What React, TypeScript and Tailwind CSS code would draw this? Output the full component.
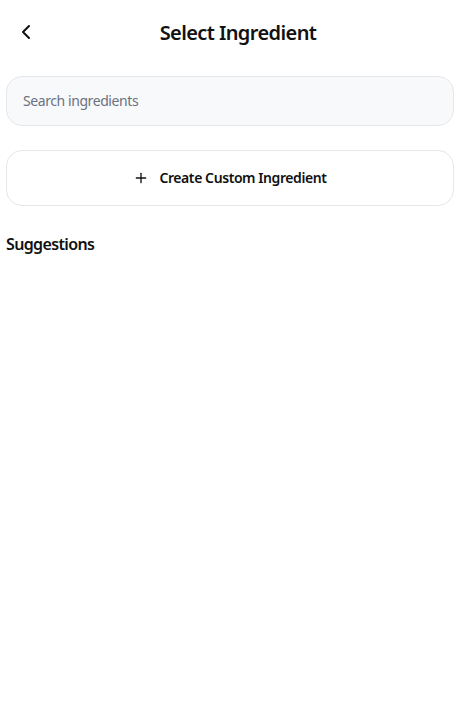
import { ChevronLeft, Plus } from "lucide-react";

export default function App() {
  return (
    <div className="min-h-screen bg-white font-['Noto_Sans',sans-serif] text-[#111111]">
      <header className="relative flex h-[66px] items-center justify-center pl-3">
        <button className="absolute left-[14px] top-[20px] flex h-6 w-6 items-center justify-center text-[#111111]">
          <ChevronLeft className="h-6 w-6" strokeWidth={2} />
        </button>
        <h1 className="text-[20px] font-semibold tracking-[-0.03em]">Select Ingredient</h1>
      </header>

      <div className="pl-[6px] pr-[10px]">
        <div className="mt-[10px] flex h-[50px] items-center rounded-2xl border border-[#e5e7eb] bg-[#f8f9fb] px-4">
          <input
            className="w-full bg-transparent text-sm tracking-[-0.03em] text-[#111111] outline-none placeholder:text-[#6b7280]"
            placeholder="Search ingredients"
          />
        </div>

        <button className="mt-6 flex h-[56px] w-full items-center justify-center gap-2.5 rounded-2xl border border-[#e5e7eb] bg-white text-sm font-semibold tracking-[-0.03em]">
          <Plus className="h-4 w-4" strokeWidth={2} />
          Create Custom Ingredient
        </button>

        <h2 className="mt-[26px] text-[16px] font-semibold tracking-[-0.04em]">Suggestions</h2>
      </div>
    </div>
  );
}
